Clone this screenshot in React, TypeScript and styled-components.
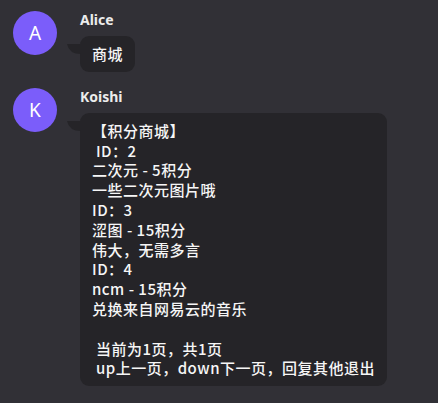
import React from "react";
import styled, { createGlobalStyle } from "styled-components";

const Global = createGlobalStyle`
  html, body { margin: 0; padding: 0; background: #313036; }
  body { font-family: "Noto Sans CJK SC", "Noto Sans", sans-serif; color: #f2f2f2; }
`;

const Page = styled.div`
  width: 438px;
  height: 403px;
  box-sizing: border-box;
  padding: 11px 0 0 13px;
  display: flex;
  flex-direction: column;
  gap: 16px;
  background: #313036;
  overflow: hidden;
`;

const Row = styled.div`
  display: flex;
  align-items: flex-start;
  gap: 23px;
`;

const Avatar = styled.div`
  width: 44px;
  height: 44px;
  flex: none;
  border-radius: 50%;
  background: #7b5dfa;
  color: #fff;
  display: flex;
  align-items: center;
  justify-content: center;
  font-family: "Noto Sans", sans-serif;
  font-size: 19px;
`;

const Body = styled.div`
  display: flex;
  flex-direction: column;
  align-items: flex-start;
  gap: 7px;
`;

const Name = styled.div`
  font-family: "Noto Sans", sans-serif;
  font-weight: 700;
  font-size: 14px;
  line-height: 18px;
  color: #ececec;
`;

const Bubble = styled.div`
  position: relative;
  background: #252428;
  border-radius: 9px;
  padding: 8px 12px;
  font-size: 15px;
  line-height: 19.8px;
  letter-spacing: 0.5px;
  font-weight: 500;
  white-space: pre;
  color: #f6f6f6;
`;

const Tail = styled.svg`
  position: absolute;
  left: -13px;
  top: 8px;
  width: 14px;
  height: 11px;
`;

const Message = ({ initial, name, text }: { initial: string; name: string; text: string }) => (
  <Row>
    <Avatar>{initial}</Avatar>
    <Body>
      <Name>{name}</Name>
      <Bubble>
        <Tail viewBox="0 0 14 11">
          <path d="M14 0 L0 0 Q2 10 14 10 Z" fill="#252428" />
        </Tail>
        {text}
      </Bubble>
    </Body>
  </Row>
);

const shopText = `【积分商城】
 ID：2
二次元 - 5积分
一些二次元图片哦
ID：3
涩图 - 15积分
伟大，无需多言
ID：4
ncm - 15积分
兑换来自网易云的音乐

 当前为1页，共1页
 up上一页，down下一页，回复其他退出`;

export default function App() {
  return (
    <>
      <Global />
      <Page>
        <Message initial="A" name="Alice" text="商城" />
        <Message initial="K" name="Koishi" text={shopText} />
      </Page>
    </>
  );
}
